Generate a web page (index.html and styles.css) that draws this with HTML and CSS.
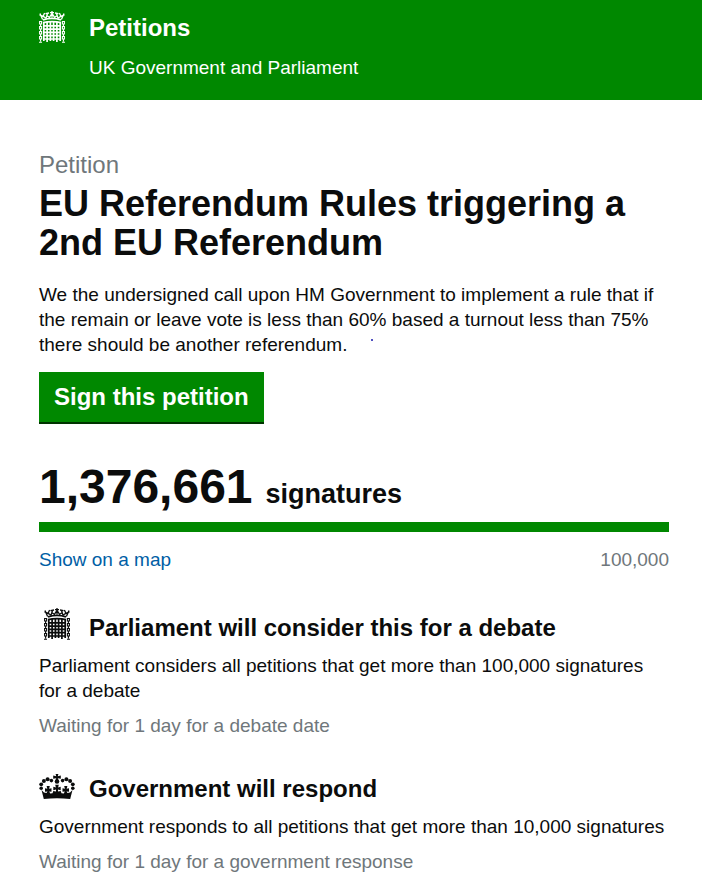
FILE: index.html
```
<!DOCTYPE html>
<html lang="en">
<head>
  <meta charset="utf-8">
  <meta name="viewport" content="width=device-width, initial-scale=1">
  <title>EU Referendum Rules triggering a 2nd EU Referendum - Petitions</title>
  <link rel="stylesheet" href="styles.css">
</head>
<body>
  <svg class="sprite" width="0" height="0" aria-hidden="true">
    <symbol id="portcullis" viewBox="0 0 26 32">
      <!-- crown -->
      <g fill="none" stroke="currentColor">
        <path stroke-width="1.8" d="M4 8.8Q13 5.800 22 8.800"/>
        <path stroke-width="1.300" d="M3.600 8.600L1 2.400M22.400 8.600L25 2.400M.5 3.600L4 5.600L5.600 2M25.500 3.600L22 5.600L20.400 2M4.600 5.400L7 7.200L8.500 2.500M21.400 5.400L19 7.200L17.500 2.500M8 4.800L10.400 6.400L13 2.400L15.600 6.400L18 4.800M13 0V6.600M11 1.600H15M6.500 2.600L10 2M19.500 2.600L16 2"/>
      </g>
      <!-- gate -->
      <g fill="none" stroke="currentColor" stroke-width="1.700">
        <path d="M4.800 11V30M8.100 10.500V31M11.400 10V30M14.600 10V30M17.900 10.500V31M21.200 11V30"/>
        <path d="M4 11.600Q13 9.600 22 11.600M4 14.800H22M4 18.100H22M4 21.400H22M4 24.700H22M4 28H22"/>
      </g>
      <!-- chains -->
      <g fill="none" stroke="currentColor" stroke-width="1.100">
        <path d="M.6 10.500h2v2.500h-2zM.6 15.500h2v2.500h-2zM.6 20.500h2v2.500h-2zM.6 25.500h2v2.500h-2zM1.600 13v2.500M1.600 18v2.500M1.600 23v2.500M1.600 28v2.500M0 31.200H3"/>
        <path d="M23.400 10.500h2v2.500h-2zM23.400 15.500h2v2.500h-2zM23.400 20.500h2v2.500h-2zM23.400 25.500h2v2.500h-2zM24.400 13v2.500M24.400 18v2.500M24.400 23v2.500M24.400 28v2.500M23 31.200H26"/>
      </g>
    </symbol>
    <symbol id="crown" viewBox="0 0 36 25">
      <g fill="currentColor">
        <!-- orb and cross -->
        <path d="M16.600 0h2.800l-.6 2.200 3-.6v3.200l-3-.6.6 2.300h-2.800l.6-2.300-3 .6V1.600l3 .6z"/>
        <circle cx="18" cy="7.500" r="2.300"/>
        <!-- pearls -->
        <circle cx="12.400" cy="6.600" r="1.800"/><circle cx="8.600" cy="5.200" r="2"/><circle cx="4.900" cy="7" r="2"/>
        <circle cx="2.200" cy="10.300" r="1.900"/><circle cx="2.200" cy="14.200" r="1.800"/>
        <circle cx="23.600" cy="6.600" r="1.800"/><circle cx="27.400" cy="5.200" r="2"/><circle cx="31.100" cy="7" r="2"/>
        <circle cx="33.800" cy="10.300" r="1.900"/><circle cx="33.800" cy="14.200" r="1.800"/>
        <!-- rim with its crosses and fleurs -->
        <path d="M2.500 16L5 18.500 7.500 19 8.500 17.500 6 17.800V14.200L8.300 14.800 7.600 12h3.200l-.7 2.800 2.400-.6v3.600L10.200 17.500 11.200 19.400 13.500 19.200 14.300 17 17 17.400V15.500L14.300 16.200V12.800L16.900 13.500 16.200 10.800h3.600L19.100 13.500l2.600-.7v3.400L19 15.500v1.900l2.700-.4.800 2.200 2.300.2 1-1.900-2.300.3v-3.600l2.400.6-.7-2.800h3.200l-.7 2.800 2.300-.6v3.600l-2.500-.3 1 1.500L31 18.500 33.500 16 31.200 25Q18 23.600 4.800 25z"/>
      </g>
    </symbol>
  </svg>

  <header class="page-header">
    <svg class="icon-portcullis" aria-hidden="true"><use href="#portcullis"/></svg>
    <div>
      <a class="site-title" href="#">Petitions</a>
      <p class="site-owner">UK Government and Parliament</p>
    </div>
  </header>

  <main class="content">
    <p class="heading-label">Petition</p>
    <h1>EU Referendum Rules triggering a 2nd EU Referendum</h1>
    <p class="summary">We the undersigned call upon HM Government to implement a rule that if the remain or leave vote is less than 60% based a turnout less than 75% there should be another referendum.<span class="speck"></span></p>

    <button class="sign-button" type="button">Sign this petition</button>

    <section class="signatures">
      <p class="count"><span class="count-number">1,376,661</span> <span>signatures</span></p>
      <div class="progress-bar"></div>
      <div class="count-links">
        <a href="#">Show on a map</a>
        <span class="threshold">100,000</span>
      </div>
    </section>

    <section class="status">
      <div class="status-title">
        <span class="status-icon"><svg class="icon-portcullis" aria-hidden="true"><use href="#portcullis"/></svg></span>
        <h2>Parliament will consider this for a debate</h2>
      </div>
      <p>Parliament considers all petitions that get more than 100,000 signatures for a debate</p>
      <p class="waiting">Waiting for 1 day for a debate date</p>
    </section>

    <section class="status">
      <div class="status-title">
        <span class="status-icon"><svg class="icon-crown" aria-hidden="true"><use href="#crown"/></svg></span>
        <h2>Government will respond</h2>
      </div>
      <p>Government responds to all petitions that get more than 10,000 signatures</p>
      <p class="waiting">Waiting for 1 day for a government response</p>
    </section>
  </main>
</body>
</html>
```
FILE: styles.css
```
body {
  margin: 0;
  background-color: #fff;
  color: #0b0c0c;
  font-family: "Liberation Sans", Arial, sans-serif;
  font-size: 19px;
  line-height: 25px;
}

h1, h2, p {
  margin: 0;
}

.sprite {
  display: block;
}

.icon-portcullis {
  display: block;
  width: 26px;
  height: 32px;
}

.icon-crown {
  display: block;
  width: 36px;
  height: 25px;
  margin-bottom: 2px;
}

.page-header {
  display: flex;
  gap: 24px;
  padding: 11px 33px 20px 39px;
  background-color: #008800;
  color: #fff;
}

.site-title {
  display: block;
  margin: 2px 0 12px;
  color: #fff;
  font-size: 24px;
  font-weight: bold;
  line-height: 30px;
  text-decoration: none;
}

.content {
  padding: 50px 33px 12px 39px;
}

.heading-label {
  color: #6f777b;
  font-size: 24px;
  line-height: 30px;
}

h1 {
  margin: 4px 0 20px;
  font-size: 36px;
  line-height: 39px;
}

.speck {
  display: inline-block;
  width: 2px;
  height: 2px;
  margin: 0 0 10px 24px;
  background-color: #5050c0;
}

.sign-button {
  display: block;
  margin-top: 15px;
  padding: 10px 15px;
  border: 0;
  border-bottom: 2px solid #003300;
  background-color: #008800;
  color: #fff;
  font-family: inherit;
  font-size: 24px;
  font-weight: bold;
  line-height: 30px;
  cursor: pointer;
}

.signatures {
  margin-top: 38px;
}

.count {
  display: flex;
  align-items: baseline;
  gap: 13px;
  font-size: 27px;
  font-weight: bold;
  line-height: 30px;
}

.count-number {
  font-size: 48px;
  line-height: 50px;
}

.progress-bar {
  height: 10px;
  margin: 10px 0 15px;
  background-color: #008800;
}

.count-links {
  display: flex;
  justify-content: space-between;
}

.count-links a {
  color: #005ea5;
  text-decoration: none;
}

.threshold,
.waiting {
  color: #6f777b;
}

.status {
  margin-top: 36px;
}

.status-title {
  display: flex;
  align-items: flex-end;
  margin-bottom: 10px;
}

.status-icon {
  display: flex;
  justify-content: center;
  width: 36px;
  margin: 0 14px 3px 0;
}

h2 {
  font-size: 24px;
  line-height: 30px;
}

.waiting {
  margin-top: 10px;
}
```
